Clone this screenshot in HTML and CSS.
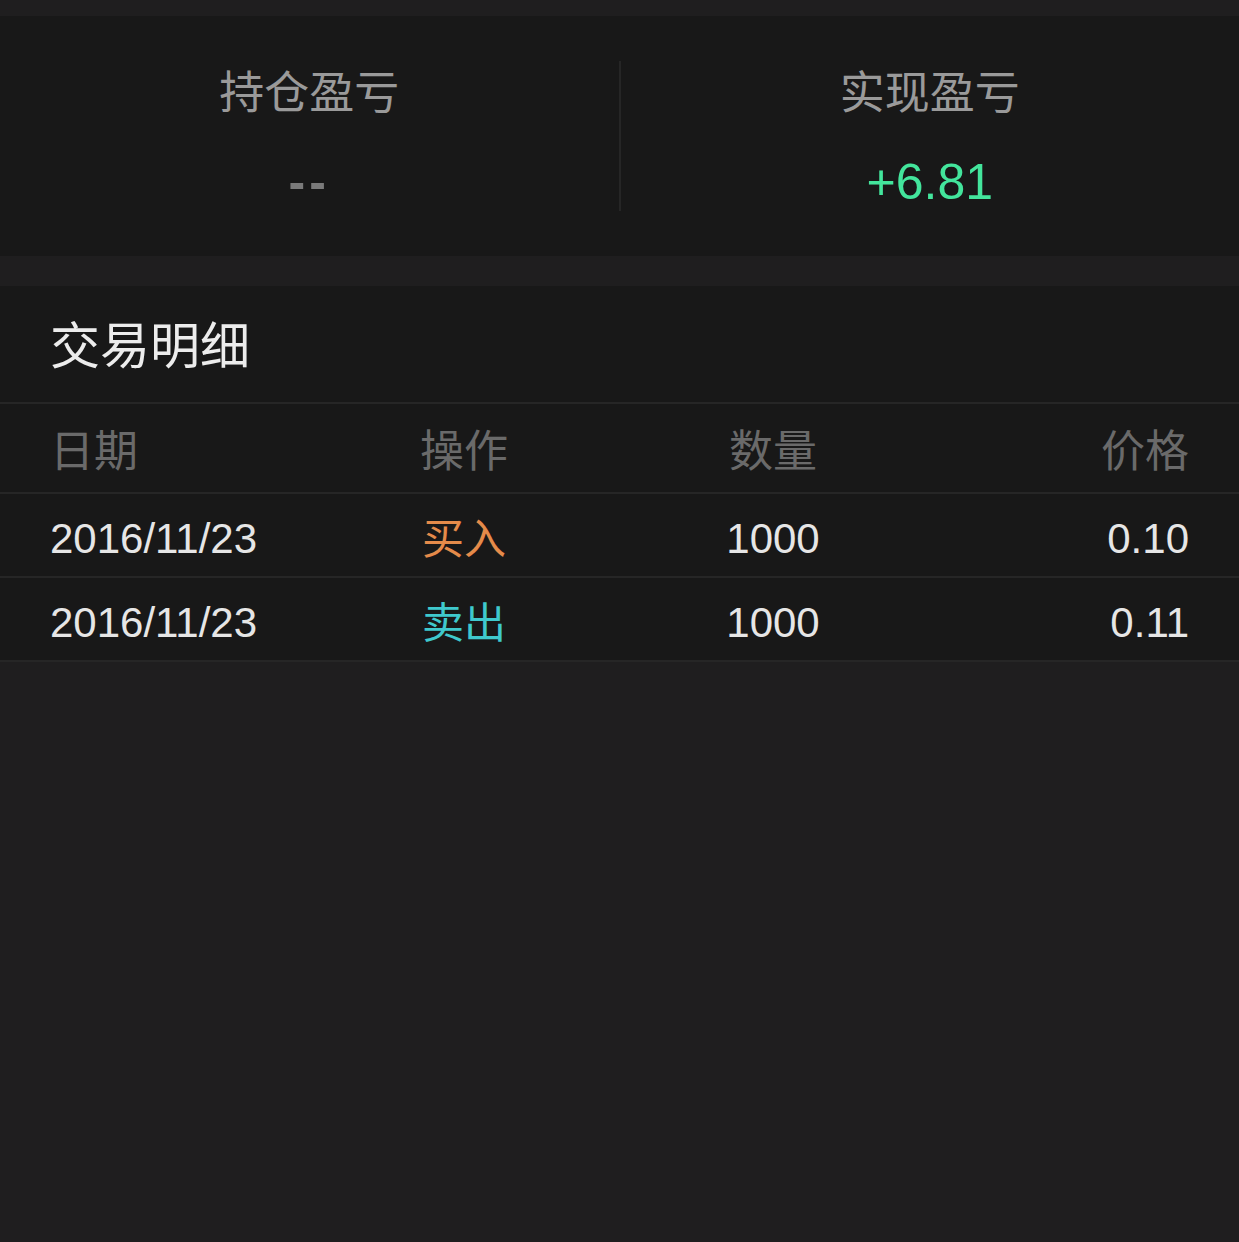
FILE: index.html
```html
<!DOCTYPE html>
<html lang="zh-CN">
<head>
<meta charset="utf-8">
<title>交易明细</title>
<link rel="stylesheet" href="styles.css">
</head>
<body>
<div class="page">
  <section class="summary">
    <div class="stat">
      <div class="stat-label">持仓盈亏</div>
      <div class="stat-value muted">--</div>
    </div>
    <div class="vdivider"></div>
    <div class="stat">
      <div class="stat-label">实现盈亏</div>
      <div class="stat-value up">+6.81</div>
    </div>
  </section>

  <section class="trades">
    <h2 class="trades-title">交易明细</h2>
    <div class="row head">
      <span class="c-date">日期</span>
      <span class="c-op">操作</span>
      <span class="c-qty">数量</span>
      <span class="c-price">价格</span>
    </div>
    <div class="row">
      <span class="c-date num">2016/11/23</span>
      <span class="c-op buy">买入</span>
      <span class="c-qty num">1000</span>
      <span class="c-price num">0.10</span>
    </div>
    <div class="row">
      <span class="c-date num">2016/11/23</span>
      <span class="c-op sell">卖出</span>
      <span class="c-qty num">1000</span>
      <span class="c-price num">0.11</span>
    </div>
  </section>
</div>
</body>
</html>
```

FILE: styles.css
```css
html, body {
  margin: 0;
  padding: 0;
  background: #1f1e1f;
}

body {
  font-family: "Liberation Sans", "Noto Sans CJK SC", sans-serif;
  width: 1239px;
  height: 1242px;
  overflow: hidden;
}

.page {
  padding-top: 16px;
}

.summary {
  display: flex;
  align-items: center;
  height: 240px;
  background: #181818;
}

.stat {
  flex: 1;
  display: flex;
  flex-direction: column;
  align-items: center;
}

.stat-label {
  font-size: 45px;
  line-height: 52px;
  color: #9a9a9a;
  margin-top: 6px;
}

.stat-value {
  font-size: 50px;
  line-height: 56px;
  margin-top: 34px;
}

.stat-value.muted {
  color: #7a7a7a;
  letter-spacing: 4px;
  font-weight: bold;
}

.stat-value.up {
  color: #43e59c;
}

.vdivider {
  width: 2px;
  height: 150px;
  background: #262626;
}

.trades {
  margin-top: 30px;
  background: #181818;
}

.trades-title {
  margin: 0;
  height: 118px;
  box-sizing: border-box;
  padding: 33px 0 0 50px;
  font-size: 50px;
  line-height: 56px;
  font-weight: normal;
  color: #ececec;
  border-bottom: 2px solid #262626;
}

.row {
  display: grid;
  grid-template-columns: 372px 254px 194px 1fr;
  align-items: center;
  height: 82px;
  padding: 0 50px;
  border-bottom: 2px solid #262626;
  font-size: 42px;
  color: #e6e6e6;
}

.row.head {
  height: 88px;
  font-size: 44px;
  color: #6a6a6a;
}

.num {
  padding-top: 7px;
}

.c-date {
  justify-self: start;
}

.c-op {
  justify-self: start;
}

.head .c-op {
  margin-left: -2px;
}

.c-qty {
  justify-self: center;
}

.c-price {
  justify-self: end;
}

.buy {
  color: #e58b4a;
}

.sell {
  color: #3fc9cd;
}
```
